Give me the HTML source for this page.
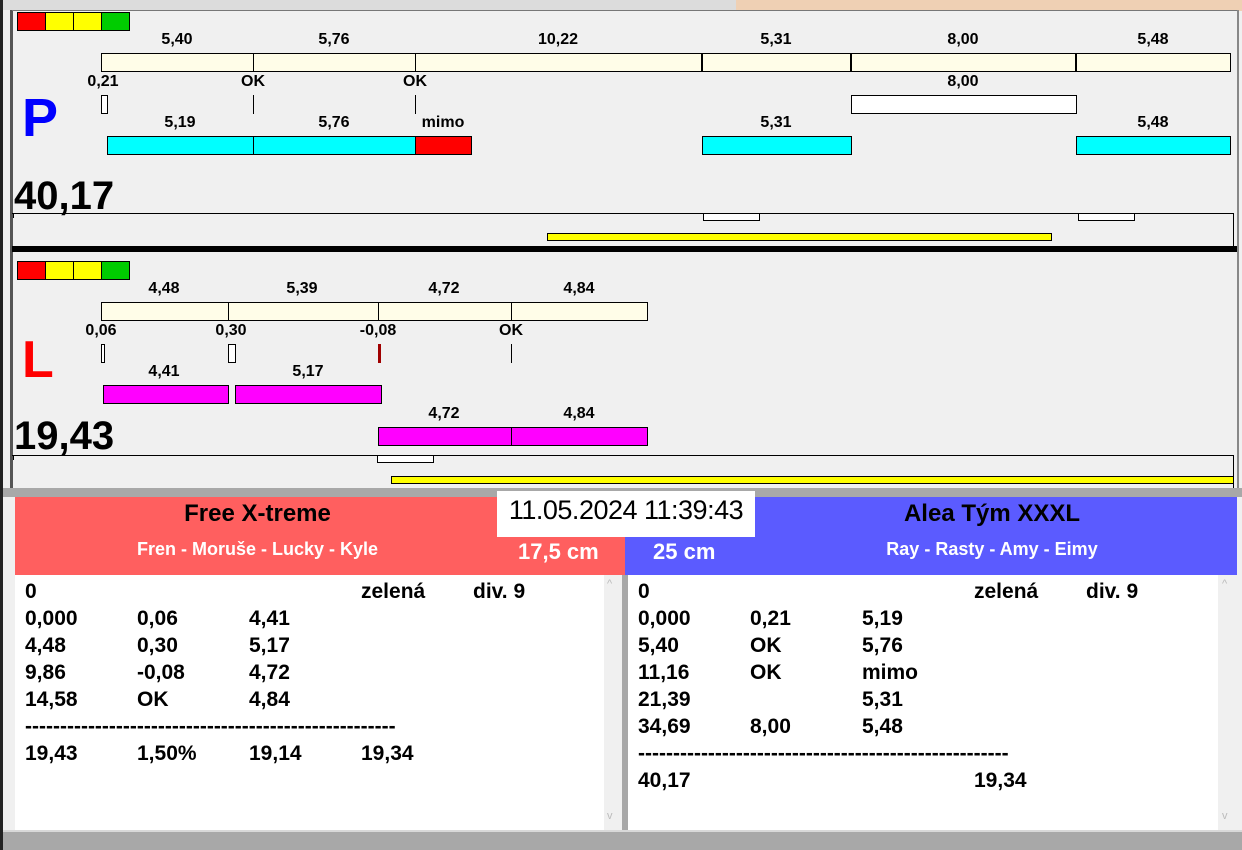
<!DOCTYPE html>
<html><head><meta charset="utf-8"><style>
*{margin:0;padding:0;box-sizing:border-box}
body{width:1242px;height:850px;background:#f0f0f0;position:relative;overflow:hidden;font-family:"Liberation Sans Narrow","Liberation Sans",sans-serif;font-weight:bold;color:#000}
div{position:absolute}
.b{border:1px solid #000}
.bg{background:#fffde8}
.cy{background:#00ffff}
.mg{background:#ff00ff}
.t{font-size:16px;line-height:16px;white-space:nowrap;transform:translateX(-50%)}
.row{font-size:21px;line-height:27px;white-space:nowrap}
.v{width:1px;background:#000}
</style></head><body>
<div style="left:0;top:0;width:1242px;height:10px;background:#dcdcdc"></div>
<div style="left:736px;top:0;width:506px;height:11px;background:#efd0b4"></div>
<div style="left:0;top:0;width:3px;height:850px;background:#222"></div>
<div style="left:10px;top:10px;width:3px;height:480px;background:#555"></div>
<div style="left:12px;top:10px;width:1226px;height:1px;background:#777"></div>
<div style="left:1237px;top:10px;width:2px;height:480px;background:#888"></div>

<div class="b" style="left:17px;top:12px;width:29px;height:19px;background:#f00"></div>
<div class="b" style="left:45px;top:12px;width:29px;height:19px;background:#ff0"></div>
<div class="b" style="left:73px;top:12px;width:29px;height:19px;background:#ff0"></div>
<div class="b" style="left:101px;top:12px;width:29px;height:19px;background:#0c0"></div>

<div class="t" style="left:177px;top:32px">5,40</div>
<div class="t" style="left:334px;top:32px">5,76</div>
<div class="t" style="left:558px;top:32px">10,22</div>
<div class="t" style="left:776px;top:32px">5,31</div>
<div class="t" style="left:963px;top:32px">8,00</div>
<div class="t" style="left:1153px;top:32px">5,48</div>
<div class="b bg" style="left:101px;top:53px;width:1130px;height:19px"></div>
<div class="v" style="left:253px;top:53px;height:19px"></div>
<div class="v" style="left:415px;top:53px;height:19px"></div>
<div class="v" style="left:701px;top:53px;height:19px;width:2px"></div>
<div class="v" style="left:850px;top:53px;height:19px;width:2px"></div>
<div class="v" style="left:1075px;top:53px;height:19px;width:2px"></div>

<div class="t" style="left:103px;top:74px">0,21</div>
<div class="t" style="left:253px;top:74px">OK</div>
<div class="t" style="left:415px;top:74px">OK</div>
<div class="t" style="left:963px;top:74px">8,00</div>
<div class="b" style="left:101px;top:95px;width:7px;height:19px;background:#fff"></div>
<div class="v" style="left:253px;top:95px;height:19px"></div>
<div class="v" style="left:415px;top:95px;height:19px"></div>
<div class="b" style="left:851px;top:95px;width:226px;height:19px;background:#fff"></div>

<div style="left:22px;top:88px;font-family:'Liberation Sans',sans-serif;font-size:54px;line-height:60px;color:#0000ff">P</div>

<div class="t" style="left:180px;top:115px">5,19</div>
<div class="t" style="left:334px;top:115px">5,76</div>
<div class="t" style="left:443px;top:115px">mimo</div>
<div class="t" style="left:776px;top:115px">5,31</div>
<div class="t" style="left:1153px;top:115px">5,48</div>
<div class="b cy" style="left:107px;top:136px;width:147px;height:19px"></div>
<div class="b cy" style="left:253px;top:136px;width:163px;height:19px"></div>
<div class="b" style="left:415px;top:136px;width:57px;height:19px;background:#f00"></div>
<div class="b cy" style="left:702px;top:136px;width:150px;height:19px"></div>
<div class="b cy" style="left:1076px;top:136px;width:155px;height:19px"></div>

<div style="left:14px;top:174px;font-size:40px;line-height:44px">40,17</div>
<div style="left:12px;top:213px;width:1222px;height:1px;background:#000"></div>
<div style="left:13px;top:213px;width:1px;height:5px;background:#000"></div>
<div style="left:1233px;top:213px;width:1px;height:34px;background:#000"></div>
<div class="b" style="left:703px;top:213px;width:57px;height:8px;background:#fff"></div>
<div class="b" style="left:1078px;top:213px;width:57px;height:8px;background:#fff"></div>
<div class="b" style="left:547px;top:233px;width:505px;height:8px;background:#ff0"></div>
<div style="left:12px;top:246px;width:1225px;height:6px;background:#000"></div>

<div class="b" style="left:17px;top:261px;width:29px;height:19px;background:#f00"></div>
<div class="b" style="left:45px;top:261px;width:29px;height:19px;background:#ff0"></div>
<div class="b" style="left:73px;top:261px;width:29px;height:19px;background:#ff0"></div>
<div class="b" style="left:101px;top:261px;width:29px;height:19px;background:#0c0"></div>

<div class="t" style="left:164px;top:281px">4,48</div>
<div class="t" style="left:302px;top:281px">5,39</div>
<div class="t" style="left:444px;top:281px">4,72</div>
<div class="t" style="left:579px;top:281px">4,84</div>
<div class="b bg" style="left:101px;top:302px;width:547px;height:19px"></div>
<div class="v" style="left:228px;top:302px;height:19px"></div>
<div class="v" style="left:378px;top:302px;height:19px"></div>
<div class="v" style="left:511px;top:302px;height:19px"></div>

<div class="t" style="left:101px;top:323px">0,06</div>
<div class="t" style="left:231px;top:323px">0,30</div>
<div class="t" style="left:378px;top:323px">-0,08</div>
<div class="t" style="left:511px;top:323px">OK</div>
<div class="b" style="left:101px;top:344px;width:4px;height:19px;background:#fff"></div>
<div class="b" style="left:228px;top:344px;width:8px;height:19px;background:#fff"></div>
<div style="left:378px;top:344px;width:3px;height:19px;background:#a00000"></div>
<div class="v" style="left:511px;top:344px;height:19px"></div>

<div style="left:22px;top:332px;font-family:'Liberation Sans',sans-serif;font-size:52px;line-height:56px;color:#ff0000">L</div>

<div class="t" style="left:164px;top:364px">4,41</div>
<div class="t" style="left:308px;top:364px">5,17</div>
<div class="b mg" style="left:103px;top:385px;width:126px;height:19px"></div>
<div class="b mg" style="left:235px;top:385px;width:147px;height:19px"></div>

<div class="t" style="left:444px;top:406px">4,72</div>
<div class="t" style="left:579px;top:406px">4,84</div>
<div class="b mg" style="left:378px;top:427px;width:134px;height:19px"></div>
<div class="b mg" style="left:511px;top:427px;width:137px;height:19px"></div>

<div style="left:14px;top:414px;font-size:40px;line-height:44px">19,43</div>
<div style="left:12px;top:455px;width:1222px;height:1px;background:#000"></div>
<div style="left:13px;top:455px;width:1px;height:5px;background:#000"></div>
<div style="left:1233px;top:455px;width:1px;height:33px;background:#000"></div>
<div class="b" style="left:377px;top:455px;width:57px;height:8px;background:#fff"></div>
<div class="b" style="left:391px;top:476px;width:843px;height:8px;background:#ff0"></div>

<div style="left:3px;top:488px;width:1239px;height:9px;background:#a8a8a8"></div>

<div style="left:15px;top:497px;width:610px;height:78px;background:#ff5f5f"></div>
<div style="left:625px;top:497px;width:612px;height:78px;background:#5b5bff"></div>
<div style="left:497px;top:491px;width:258px;height:46px;background:#fff"></div>
<div style="left:497px;top:491px;width:258px;height:40px;font-family:'Liberation Sans',sans-serif;font-weight:normal;font-size:27px;line-height:38px;text-align:center;white-space:nowrap;letter-spacing:-0.5px">11.05.2024 11:39:43</div>
<div style="left:15px;top:497px;width:485px;font-size:24px;line-height:34px;text-align:center">Free X-treme</div>
<div style="left:15px;top:536px;width:485px;font-size:18px;line-height:26px;text-align:center;color:#fff">Fren - Moruše - Lucky - Kyle</div>
<div style="left:518px;top:538px;font-size:22px;line-height:28px;color:#fff">17,5 cm</div>
<div style="left:752px;top:497px;width:480px;font-size:24px;line-height:34px;text-align:center">Alea Tým XXXL</div>
<div style="left:752px;top:536px;width:480px;font-size:18px;line-height:26px;text-align:center;color:#fff">Ray - Rasty - Amy - Eimy</div>
<div style="left:653px;top:538px;font-size:22px;line-height:28px;color:#fff">25 cm</div>

<div style="left:15px;top:575px;width:608px;height:255px;background:#fff;border-right:1px solid #ccc"></div>
<div style="left:604px;top:575px;width:18px;height:255px;background:#f0f0f0"></div>
<div style="left:622px;top:575px;width:6px;height:255px;background:#a8a8a8"></div>
<div style="left:628px;top:575px;width:609px;height:255px;background:#fff"></div>
<div style="left:1218px;top:575px;width:19px;height:255px;background:#f0f0f0"></div>
<div style="left:607px;top:578px;font-size:11px;color:#bbb;font-weight:normal">^</div>
<div style="left:607px;top:810px;font-size:11px;color:#bbb;font-weight:normal">v</div>
<div style="left:1222px;top:578px;font-size:11px;color:#bbb;font-weight:normal">^</div>
<div style="left:1222px;top:810px;font-size:11px;color:#bbb;font-weight:normal">v</div>

<div class="row" style="left:25px;top:578px;width:580px;height:27px"><div style="left:0;top:0">0</div><div style="left:336px;top:0">zelená</div><div style="left:448px;top:0">div. 9</div></div>
<div class="row" style="left:25px;top:605px;width:580px">
<div style="left:0;top:0">0,000<br>4,48<br>9,86<br>14,58<br>-----------------------------------------------------<br>19,43</div>
<div style="left:112px;top:0">0,06<br>0,30<br>-0,08<br>OK<br><br>1,50%</div>
<div style="left:224px;top:0">4,41<br>5,17<br>4,72<br>4,84<br><br>19,14</div>
<div style="left:336px;top:0"><br><br><br><br><br>19,34</div>
</div>

<div class="row" style="left:638px;top:578px;width:580px;height:27px"><div style="left:0;top:0">0</div><div style="left:336px;top:0">zelená</div><div style="left:448px;top:0">div. 9</div></div>
<div class="row" style="left:638px;top:605px;width:580px">
<div style="left:0;top:0">0,000<br>5,40<br>11,16<br>21,39<br>34,69<br>-----------------------------------------------------<br>40,17</div>
<div style="left:112px;top:0">0,21<br>OK<br>OK<br><br>8,00</div>
<div style="left:224px;top:0">5,19<br>5,76<br>mimo<br>5,31<br>5,48</div>
<div style="left:336px;top:0"><br><br><br><br><br><br>19,34</div>
</div>

<div style="left:3px;top:830px;width:1239px;height:20px;background:#a8a8a8;border-top:2px solid #d8d8d8"></div>
</body></html>
